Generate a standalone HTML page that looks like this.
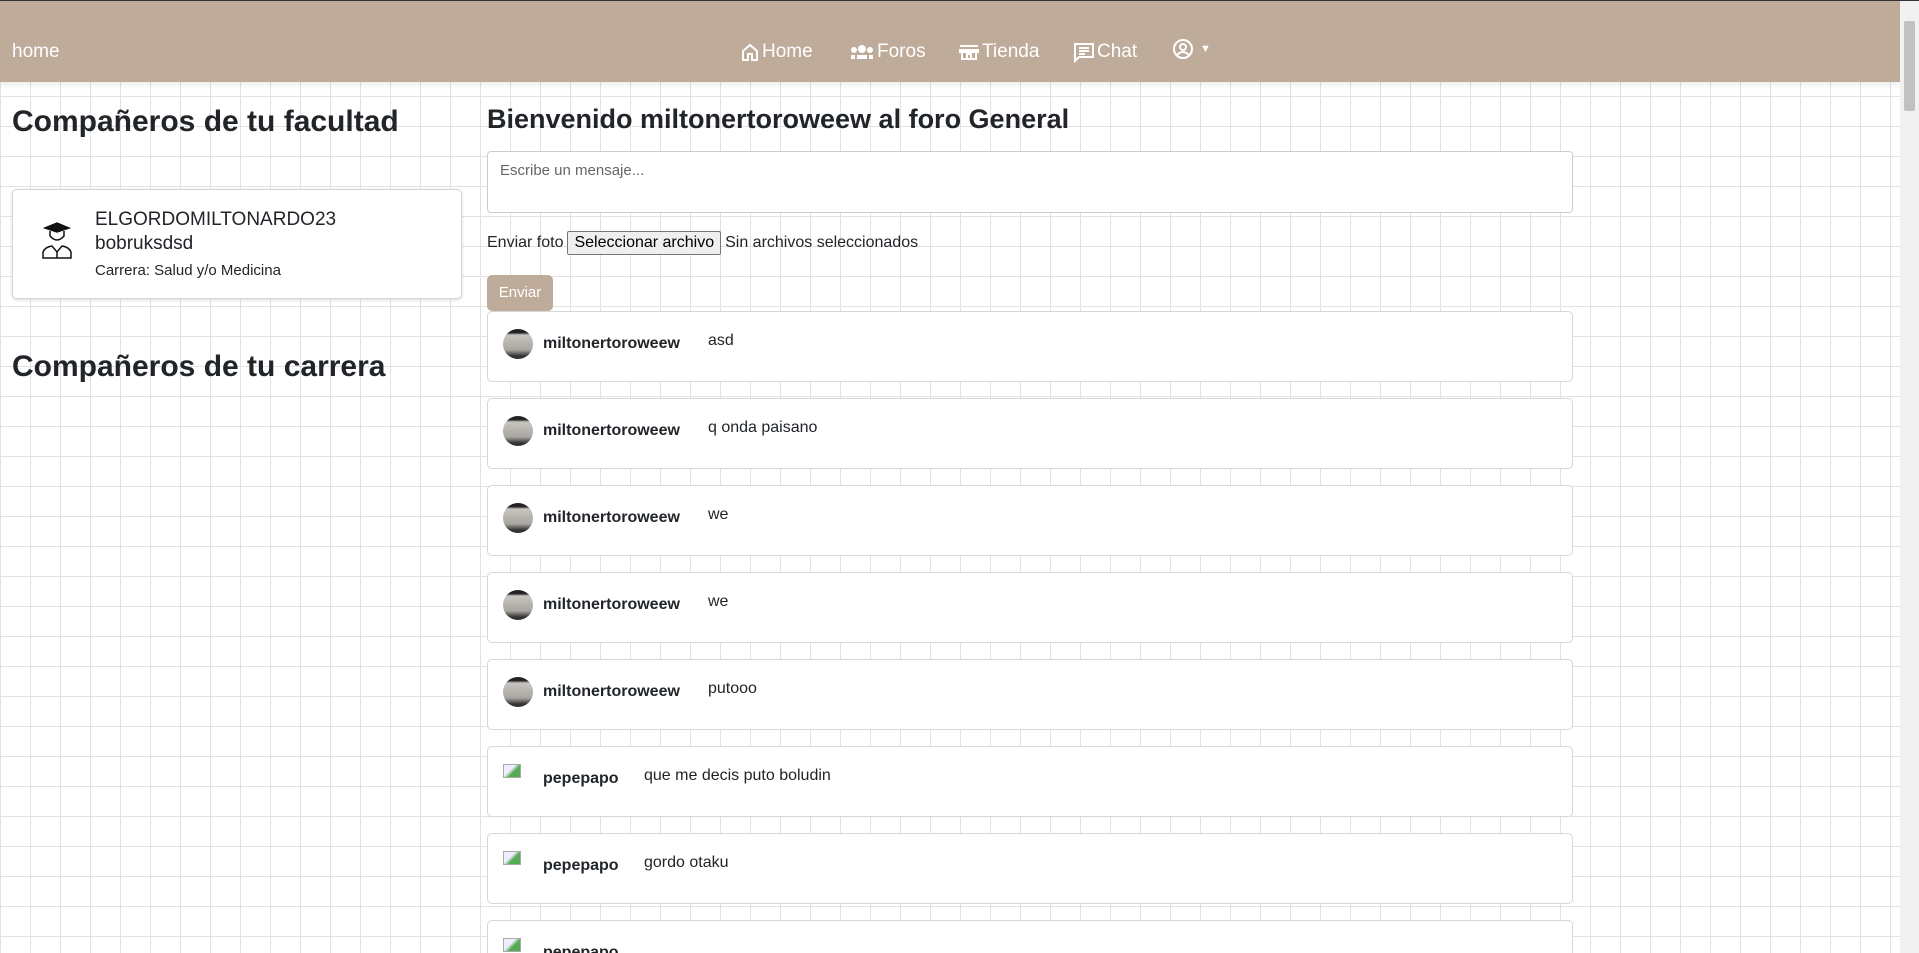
<!DOCTYPE html>
<html><head><meta charset="utf-8">
<style>
*{box-sizing:border-box;margin:0;padding:0}
html,body{width:1919px;height:953px;overflow:hidden}
body{font-family:"Liberation Sans",sans-serif;color:#212529;background-color:#fff;
background-image:linear-gradient(#e2e2e2 1px,transparent 1px),linear-gradient(90deg,#e2e2e2 1px,transparent 1px);
background-size:30px 30px;background-position:0 6px;position:relative}
.top{position:absolute;left:0;top:0;width:1919px;height:1px;background:#333}
nav{position:absolute;left:0;top:1px;width:1900px;height:81px;background:#bfab99;color:#fff;box-shadow:0 3px 6px rgba(0,0,0,.08)}
nav .brand{position:absolute;left:12px;top:40px;font-size:19px}
nav .it{position:absolute;top:40px;font-size:19px;display:flex;align-items:center;gap:2px}
nav svg{fill:none;stroke:#fff;stroke-width:2}
.scroll{position:absolute;right:0;top:1px;width:19px;height:952px;background:#f1f1f1}
.scroll div{position:absolute;left:4px;top:20px;width:11px;height:90px;background:#c1c1c1;border-radius:2px}
h2{position:absolute;font-weight:bold;font-size:30px;left:12px;color:#212529}
.card{position:absolute;background:#fff;border:1px solid #d6d6d6;border-radius:5px}
.ucard{left:12px;top:189px;width:450px;height:110px;box-shadow:0 1px 3px rgba(0,0,0,.15)}
h1{position:absolute;left:487px;top:104px;font-size:27px;font-weight:bold}
.ta{position:absolute;left:487px;top:151px;width:1086px;height:62px;background:#fff;border:1px solid #ccc;border-radius:4px;font-size:15px;color:#666;padding:10px 12px}
.foto{position:absolute;left:487px;top:231px;font-size:16px;display:flex;align-items:center;gap:4px}
.foto button{font:inherit;font-size:16px;background:#efefef;border:1px solid #767676;border-radius:2px;padding:2px 6px;color:#000}
.env{position:absolute;left:487px;top:275px;width:66px;height:36px;background:#bfab99;color:#fff;border-radius:5px;font-size:15px;text-align:center;line-height:36px}
.msg{left:487px;width:1086px;height:71px}
.msg .av{position:absolute;left:15px;top:17px;width:30px;height:30px;border-radius:50%;background:linear-gradient(#222 0,#222 12%,#c8c4c0 20%,#a9a5a0 70%,#333 90%)}
.msg .br{position:absolute;left:15px;top:17px;width:18px;height:14px;border:1px solid #aaa;background:linear-gradient(135deg,#eef 40%,#5a5 60%)}
.msg .n{position:absolute;left:55px;top:23px;font-weight:bold;font-size:16px}
.msg .t{position:absolute;top:20px;font-size:16px}
</style></head><body>
<div class="top"></div>
<nav>
<div class="brand">home</div>
<div class="it" style="left:740px"><svg width="20" height="20" viewBox="0 0 20 20"><path d="M3 9L10 3L17 9V18H12V12H8V18H3Z"/></svg>Home</div>
<div class="it" style="left:849px"><svg width="26" height="20" viewBox="0 0 26 20"><circle cx="13" cy="7" r="3" fill="#fff"/><circle cx="5" cy="8" r="2" fill="#fff"/><circle cx="21" cy="8" r="2" fill="#fff"/><path d="M8 15H18M2 15H6M20 15H24" stroke-width="4"/></svg>Foros</div>
<div class="it" style="left:958px"><svg width="22" height="20" viewBox="0 0 22 20"><path d="M2 4H20M2 8H20V10H2ZM4 10V17H18V10M9 17V12H13V17"/></svg>Tienda</div>
<div class="it" style="left:1073px"><svg width="22" height="22" viewBox="0 0 22 22"><path d="M2 3H20V16H6L2 20Z M6 7H16M6 10H16M6 13H12"/></svg>Chat</div>
<div class="it" style="left:1172px;top:37px"><svg width="22" height="22" viewBox="0 0 22 22"><circle cx="11" cy="11" r="9"/><circle cx="11" cy="9" r="3"/><path d="M5 17Q11 11 17 17"/></svg><span style="font-size:11px;margin-left:4px">▼</span></div>
</nav>
<div class="scroll"><div></div></div>
<h2 style="top:105px">Compañeros de tu facultad</h2>
<div class="card ucard">
<svg style="position:absolute;left:26px;top:32px" width="36" height="40" viewBox="0 0 36 40" fill="none" stroke="#111" stroke-width="1.5"><path d="M6 6L18 1L30 6L18 10Z" fill="#111"/><path d="M11 9V14Q18 22 25 14V9"/><path d="M4 36V30Q6 25 13 24L18 30L23 24Q30 25 32 30V36Z"/><path d="M18 30V36"/></svg>
<div style="position:absolute;left:82px;top:18px;font-size:19px;line-height:24px">ELGORDOMILTONARDO23<br>bobruksdsd</div>
<div style="position:absolute;left:82px;top:72px;font-size:15px">Carrera: Salud y/o Medicina</div>
</div>
<h2 style="top:350px">Compañeros de tu carrera</h2>
<h1>Bienvenido miltonertoroweew al foro General</h1>
<div class="ta">Escribe un mensaje...</div>
<div class="foto">Enviar foto <button>Seleccionar archivo</button> Sin archivos seleccionados</div>
<div class="env">Enviar</div>

<div class="card msg" style="top:311px"><div class="av"></div><div class="n">miltonertoroweew</div><div class="t" style="left:220px">asd</div></div>
<div class="card msg" style="top:398px"><div class="av"></div><div class="n">miltonertoroweew</div><div class="t" style="left:220px">q onda paisano</div></div>
<div class="card msg" style="top:485px"><div class="av"></div><div class="n">miltonertoroweew</div><div class="t" style="left:220px">we</div></div>
<div class="card msg" style="top:572px"><div class="av"></div><div class="n">miltonertoroweew</div><div class="t" style="left:220px">we</div></div>
<div class="card msg" style="top:659px"><div class="av"></div><div class="n">miltonertoroweew</div><div class="t" style="left:220px">putooo</div></div>
<div class="card msg" style="top:746px"><div class="br"></div><div class="n">pepepapo</div><div class="t" style="left:156px">que me decis puto boludin</div></div>
<div class="card msg" style="top:833px"><div class="br"></div><div class="n">pepepapo</div><div class="t" style="left:156px">gordo otaku</div></div>
<div class="card msg" style="top:920px"><div class="br"></div><div class="n">pepepapo</div></div>
</body></html>
